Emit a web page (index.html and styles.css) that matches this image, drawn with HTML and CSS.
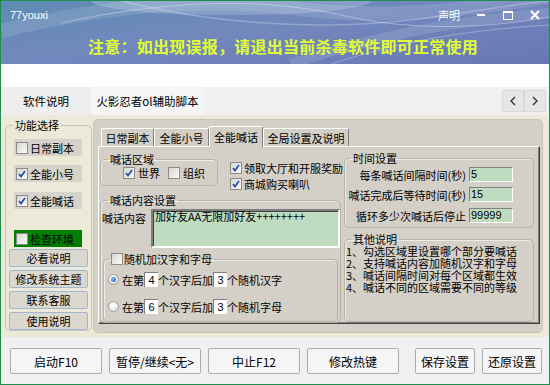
FILE: index.html
```html
<!DOCTYPE html>
<html lang="zh-CN">
<head>
    <meta charset="UTF-8">
    <title>77youxi</title>
    <link rel="stylesheet" href="styles.css">
</head>
<body>
<div class="win">
    <div class="head">
        <svg class="swirl" width="548" height="63" viewBox="0 0 548 63">
            <ellipse cx="230" cy="0" rx="140" ry="14" fill="#fff" opacity="0.18"/>
            <path d="M0 30 C90 8 190 -6 300 8 C380 18 460 10 548 -4" stroke="#fff" stroke-width="14" fill="none" opacity="0.12"/>
            <path d="M60 22 C150 2 250 -6 340 14 C400 28 470 30 548 16" stroke="#fff" stroke-width="1" fill="none" opacity="0.35"/>
            <path d="M120 0 C200 20 300 30 400 20 C460 14 500 4 548 0" stroke="#fff" stroke-width="1.5" fill="none" opacity="0.25"/>
            <path d="M290 63 C360 40 430 22 548 12" stroke="#fff" stroke-width="10" fill="none" opacity="0.12"/>
            <path d="M330 63 C390 44 450 30 548 24" stroke="#fff" stroke-width="1" fill="none" opacity="0.3"/>
        </svg>
        <div class="topbar">
            <span class="brand">77youxi</span>
            <span class="decl">声明</span>
            <svg class="wc wc-min" width="8" height="2" viewBox="0 0 8 2"><rect width="8" height="2" fill="#fff"/></svg>
            <svg class="wc wc-max" width="10" height="9" viewBox="0 0 10 9"><rect x="0.5" y="1" width="9" height="7.5" fill="none" stroke="#fff" stroke-width="1"/><rect width="10" height="2" fill="#fff"/></svg>
            <svg class="wc wc-close" width="10" height="10" viewBox="0 0 10 10"><path d="M1 1 L9 9 M9 1 L1 9" stroke="#fff" stroke-width="2"/></svg>
        </div>
        <div class="notice">注意：如出现误报，请退出当前杀毒软件即可正常使用</div>
    </div>

    <div class="blank"></div>

    <div class="nav">
        <span class="nt">软件说明</span>
        <span class="nt nt-game">火影忍者ol辅助脚本</span>
        <span class="arrows">
            <span class="arr"><svg width="6" height="10" viewBox="0 0 6 10"><polyline points="5,1 1,5 5,9" fill="none" stroke="#333" stroke-width="1.4"/></svg></span>
            <span class="arr"><svg width="6" height="10" viewBox="0 0 6 10"><polyline points="1,1 5,5 1,9" fill="none" stroke="#333" stroke-width="1.4"/></svg></span>
        </span>
    </div>

    <div class="main">
        <fieldset class="side">
            <legend>功能选择</legend>
            <div class="opt o1"><span class="cb"></span>日常副本</div>
            <div class="opt o2"><span class="cb on"><svg width="8" height="8" viewBox="0 0 8 8"><path d="M1 4 L3 6.5 L7 1" fill="none" stroke="#2448b4" stroke-width="1.7"/></svg></span>全能小号</div>
            <div class="opt o3"><span class="cb on"><svg width="8" height="8" viewBox="0 0 8 8"><path d="M1 4 L3 6.5 L7 1" fill="none" stroke="#2448b4" stroke-width="1.7"/></svg></span>全能喊话</div>
            <div class="opt env"><span class="cb"></span>检查环境</div>
            <div class="sbtn s1">必看说明</div>
            <div class="sbtn">修改系统主题</div>
            <div class="sbtn">联系客服</div>
            <div class="sbtn">使用说明</div>
        </fieldset>

        <div class="tabbox">
            <div class="tabs">
                <span class="tab t1">日常副本</span>
                <span class="tab t2">全能小号</span>
                <span class="tab t3 cur">全能喊话</span>
                <span class="tab t4">全局设置及说明</span>
            </div>
            <div class="page">
                <div class="col-l">
                    <div class="row-top">
                        <fieldset class="grp g-area">
                            <legend>喊话区域</legend>
                            <div class="area-row">
                                <span class="cb on"><svg width="8" height="8" viewBox="0 0 8 8"><path d="M1 4 L3 6.5 L7 1" fill="none" stroke="#2448b4" stroke-width="1.7"/></svg></span>
                                <span class="lbl">世界</span>
                                <span class="cb cb-org"></span>
                                <span class="lbl">组织</span>
                            </div>
                        </fieldset>
                        <div class="extras">
                            <div class="ex"><span class="cb on"><svg width="8" height="8" viewBox="0 0 8 8"><path d="M1 4 L3 6.5 L7 1" fill="none" stroke="#2448b4" stroke-width="1.7"/></svg></span>领取大厅和开服奖励</div>
                            <div class="ex"><span class="cb on"><svg width="8" height="8" viewBox="0 0 8 8"><path d="M1 4 L3 6.5 L7 1" fill="none" stroke="#2448b4" stroke-width="1.7"/></svg></span>商城购买喇叭</div>
                        </div>
                    </div>

                    <fieldset class="grp g-content">
                        <legend>喊话内容设置</legend>
                        <div class="msg-row">
                            <span class="msg-lbl">喊话内容</span>
                            <div class="msg">加好友AA无限加好友++++++++</div>
                        </div>
                        <fieldset class="grp g-rand">
                            <legend><span class="lg-cb"><span class="cb"></span>随机加汉字和字母</span></legend>
                            <div class="rrow r1"><span class="rd on"></span>在第<span class="num">4</span>个汉字后加<span class="num">3</span>个随机汉字</div>
                            <div class="rrow r2"><span class="rd"></span>在第<span class="num">6</span>个汉字后加<span class="num">3</span>个随机字母</div>
                        </fieldset>
                    </fieldset>
                </div>

                <div class="col-r">
                    <fieldset class="grp g-time">
                        <legend>时间设置</legend>
                        <div class="trow tr1"><span>每条喊话间隔时间(秒)</span><span class="tin">5</span></div>
                        <div class="trow tr2"><span>喊话完成后等待时间(秒)</span><span class="tin">15</span></div>
                        <div class="trow tr3"><span>循环多少次喊话后停止</span><span class="tin">99999</span></div>
                    </fieldset>
                    <fieldset class="grp g-note">
                        <legend>其他说明</legend>
                        <div class="notes">
                            <div>1、勾选区域里设置哪个部分要喊话</div>
                            <div>2、支持喊话内容加随机汉字和字母</div>
                            <div>3、喊话间隔时间对每个区域都生效</div>
                            <div>4、喊话不同的区域需要不同的等级</div>
                        </div>
                    </fieldset>
                </div>
            </div>
        </div>
    </div>

    <div class="foot">
        <span class="fbtn">启动F10</span>
        <span class="fbtn">暂停/继续&lt;无&gt;</span>
        <span class="fbtn">中止F12</span>
        <span class="fbtn">修改热键</span>
        <span class="fbtn sm save">保存设置</span>
        <span class="fbtn sm">还原设置</span>
    </div>
</div>
</body>
</html>
```

FILE: styles.css
```css
* { box-sizing: border-box; }
body { margin: 0; font-family: "Noto Sans CJK SC", "Liberation Sans", sans-serif; font-size: 11px; color: #000; }

.win { width: 550px; height: 385px; border: 1px solid #1f8b4d; display: flex; flex-direction: column; overflow: hidden; background: #ece9d8; }

/* header banner */
.head { position: relative; height: 63px; flex: none; overflow: hidden; background: linear-gradient(172deg, #5d8cb2 0%, #7288bd 45%, #6877b3 100%); }
.swirl { position: absolute; left: 0; top: 0; }
.topbar { position: relative; display: flex; align-items: center; height: 28px; padding: 0 9px; color: #fff; }
.brand { flex: 1; font-family: "Liberation Sans", sans-serif; font-size: 11px; }
.decl { font-size: 11px; }
.wc { display: block; }
.wc-min { margin-left: 17px; }
.wc-max { margin-left: 18px; }
.wc-close { margin-left: 17px; }
.notice { position: relative; margin-top: 7px; padding-left: 16px; text-align: center; font-size: 16px; line-height: 20px; font-weight: bold; color: #e2ff33; letter-spacing: 0.25px; }

.blank { height: 23px; flex: none; background: #fff; }

/* top tab strip */
.nav { height: 28px; flex: none; display: flex; align-items: stretch; background: #f0f0f0; font-size: 11.5px; }
.nt { width: 90px; display: flex; align-items: center; justify-content: center; background: #eeeeee; }
.nt-game { width: 113px; background: #f5f5f5; }
.arrows { margin-left: auto; margin-right: 3px; display: flex; align-items: center; }
.arr { width: 22px; height: 22px; display: flex; align-items: center; justify-content: center; background: #e6e6e6; border: 1px solid #d9d9d9; }

/* main area */
.main { height: 222px; flex: none; display: flex; align-items: flex-start; padding: 3px 0 0 4px; background: #ece9d8; }
fieldset { margin: 0; padding: 0; min-width: 0; }
legend { padding: 0 2px; font-size: 11px; line-height: 14px; }

.side { width: 87px; height: 213px; border: 1px solid #c9c6b6; border-radius: 5px; }
.side legend { margin-left: 7px; }
.opt { width: 68px; height: 17px; margin-left: 8px; display: flex; align-items: center; gap: 2px; padding-left: 2px; background: #d6d3cb; }
.o1 { margin-top: 7px; }
.o2 { margin-top: 9px; }
.o3 { margin-top: 10px; }
.env { margin-top: 21px; background: #007f00; }
.sbtn { width: 79px; height: 18px; margin: 3px 0 0 3px; display: flex; align-items: center; justify-content: center; background: #dbd8cf; border: 1px solid #a2b7d0; border-radius: 2px; }
.s1 { margin-top: 2px; }

.cb { width: 12px; height: 12px; flex: none; display: flex; align-items: center; justify-content: center; border: 1px solid #8c8c8c; background: linear-gradient(135deg, #d6d6d0, #fbfbf9); }

/* tab control */
.tabbox { width: 450px; height: 214px; margin: 1px 0 0 1px; padding: 6px 0 0 4px; background: #d4d0c8; border: 1px solid #c9c6b6; border-radius: 5px; }
.tabs { height: 20px; display: flex; align-items: flex-end; padding-left: 3px; }
.tab { height: 18px; display: flex; align-items: center; justify-content: center; border: 1px solid; border-color: #fff #808080 transparent #fff; border-bottom: 0; border-radius: 2px 2px 0 0; background: #d4d0c8; }
.t1 { width: 53px; }
.t2 { width: 55px; }
.t3 { width: 54px; }
.t4 { width: 86px; }
.tab.cur { position: relative; z-index: 1; height: 21px; margin-bottom: -1px; }

.page { width: 442px; height: 178px; display: flex; padding-left: 1px; border: 1px solid; border-color: #fff #404040 #404040 #fff; box-shadow: inset -1px -1px 0 #808080; }
.col-l { width: 241px; flex: none; }
.col-r { width: 190px; flex: none; margin: 4px 0 0 3px; }

.grp { border: 1px solid #b5b2a8; border-radius: 5px; box-shadow: inset 1px 1px 0 #ecebe6; }
.grp legend { margin-left: 7px; }

.row-top { display: flex; align-items: flex-start; height: 39px; }
.g-area { width: 118px; flex: none; margin-top: 5px; }
.area-row { height: 15px; margin: -1px 0 5px; padding-left: 22px; display: flex; align-items: center; }
.area-row .lbl { margin-left: 3px; }
.cb-org { margin-left: 8px; }
.extras { flex: none; margin: 13px 0 0 12px; white-space: nowrap; }
.ex { height: 15px; margin-bottom: 1px; display: flex; align-items: center; gap: 2px; }

.g-content { height: 130px; margin-top: 7px; }
.msg-row { display: flex; margin-top: 2px; }
.msg-lbl { width: 50px; padding: 2px 0 0 1px; line-height: 14px; }
.msg { width: 189px; height: 39px; padding: 0 2px; line-height: 11px; background: #c0dcc0; border: 2px solid; border-color: #808080 #fff #fff #808080; box-shadow: inset 1px 1px 0 #404040; }

.g-rand { width: 235px; height: 70px; margin: 4px 0 0 2px; }
.g-rand legend { margin-left: 5px; }
.lg-cb { display: flex; align-items: center; gap: 1px; }
.rrow { height: 15px; display: flex; align-items: center; padding-left: 4px; }
.r1 { margin-top: 6px; }
.r2 { margin-top: 12px; }
.rd { width: 11px; height: 11px; margin-right: 3px; flex: none; display: flex; align-items: center; justify-content: center; border: 1px solid #a0a0a0; border-radius: 50%; background: radial-gradient(circle at 40% 40%, #fff, #d6d6d2); }
.rd.on::after { content: ""; width: 5px; height: 5px; border-radius: 50%; background: radial-gradient(circle at 40% 40%, #7fb8ff, #1c58b8); }
.num { width: 14px; height: 15px; display: flex; align-items: center; justify-content: center; font-family: "Liberation Sans", sans-serif; background: #fff; border-top: 1px solid #808080; border-left: 1px solid #808080; }

.g-time { height: 77px; }
.g-time legend, .g-note legend { margin-left: 6px; }
.trow { height: 15px; display: flex; align-items: center; justify-content: flex-end; padding-right: 20px; white-space: nowrap; }
.trow span:first-child { margin-right: 3px; }
.tr1 { margin-top: 2px; }
.tr2 { margin-top: 5px; }
.tr3 { margin-top: 6px; }
.tin { width: 44px; height: 15px; padding-left: 1px; line-height: 13px; font-family: "Liberation Sans", sans-serif; background: #c0dcc0; border: 1px solid; border-color: #808080 #fff #fff #808080; }

.g-note { height: 90px; margin-top: 4px; }
.notes { margin-top: -1px; padding-left: 1px; }
.notes div { height: 12px; line-height: 12px; white-space: nowrap; }

/* bottom buttons */
.foot { height: 47px; flex: none; display: flex; align-items: flex-start; gap: 7px; padding: 11px 0 0 9px; background: #f0f0f0; }
.fbtn { width: 92px; height: 26px; display: flex; align-items: center; justify-content: center; font-size: 12px; background: #f5f5f5; border: 1px solid #adadad; border-radius: 2px; }
.fbtn.sm { width: 60px; }
.fbtn.save { margin-left: 9px; }
```
